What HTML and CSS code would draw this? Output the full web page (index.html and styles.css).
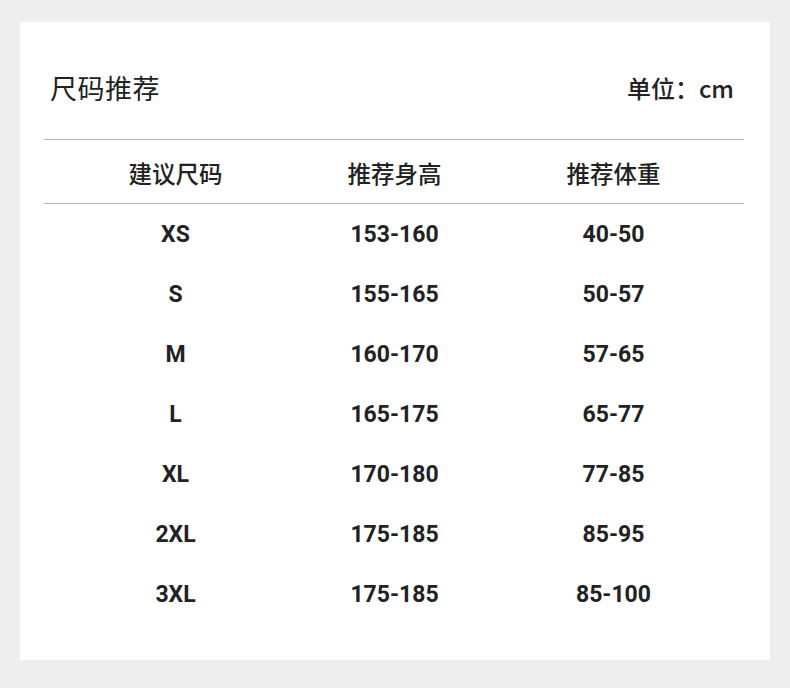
FILE: index.html
```html
<!DOCTYPE html>
<html lang="zh">
<head>
<meta charset="utf-8">
<link rel="stylesheet" href="styles.css">
</head>
<body>
<div class="card">
  <div class="title-row">
    <div class="title">尺码推荐</div>
    <div class="unit">单位：cm</div>
  </div>
  <div class="table">
    <div class="row head">
      <div>建议尺码</div><div>推荐身高</div><div>推荐体重</div>
    </div>
    <div class="body">
      <div class="row"><div>XS</div><div>153-160</div><div>40-50</div></div>
      <div class="row"><div>S</div><div>155-165</div><div>50-57</div></div>
      <div class="row"><div>M</div><div>160-170</div><div>57-65</div></div>
      <div class="row"><div>L</div><div>165-175</div><div>65-77</div></div>
      <div class="row"><div>XL</div><div>170-180</div><div>77-85</div></div>
      <div class="row"><div>2XL</div><div>175-185</div><div>85-95</div></div>
      <div class="row"><div>3XL</div><div>175-185</div><div>85-100</div></div>
    </div>
  </div>
</div>
</body>
</html>
```
FILE: styles.css
```css
html, body {
  margin: 0;
  padding: 0;
}
body {
  background: #eeeeee;
  width: 790px;
  height: 688px;
  overflow: hidden;
  font-family: Roboto, "Noto Sans CJK SC", sans-serif;
  color: #222222;
}
.card {
  background: #ffffff;
  margin: 22px 20px 0 20px;
  width: 750px;
  height: 638px;
  box-sizing: border-box;
  padding: 0 26px 0 24px;
}
.title-row {
  height: 118px;
  box-sizing: border-box;
  border-bottom: 1px solid #b4b4b4;
  display: flex;
  justify-content: space-between;
  align-items: flex-start;
  padding: 50px 10px 0 6px;
}
.title {
  font-family: "Noto Sans CJK SC", sans-serif;
  font-size: 27px;
  line-height: 32px;
  font-weight: 400;
  color: #222;
  letter-spacing: 0.5px;
}
.unit {
  font-family: "Noto Sans CJK SC", sans-serif;
  font-size: 24px;
  line-height: 32px;
  margin-top: 0;
  font-weight: 500;
  color: #222;
}
.row {
  display: grid;
  grid-template-columns: 219px 219px 219px;
  padding-left: 22px;
  align-items: center;
  height: 60px;
}
.row > div {
  text-align: center;
  font-size: 23px;
  font-weight: 700;
}
.row.head {
  height: 64px;
  border-bottom: 1px solid #b4b4b4;
  padding-top: 2px;
  box-sizing: border-box;
}
.row.head > div {
  font-family: "Noto Sans CJK SC", sans-serif;
  font-size: 23.5px;
  font-weight: 500;
}
```
